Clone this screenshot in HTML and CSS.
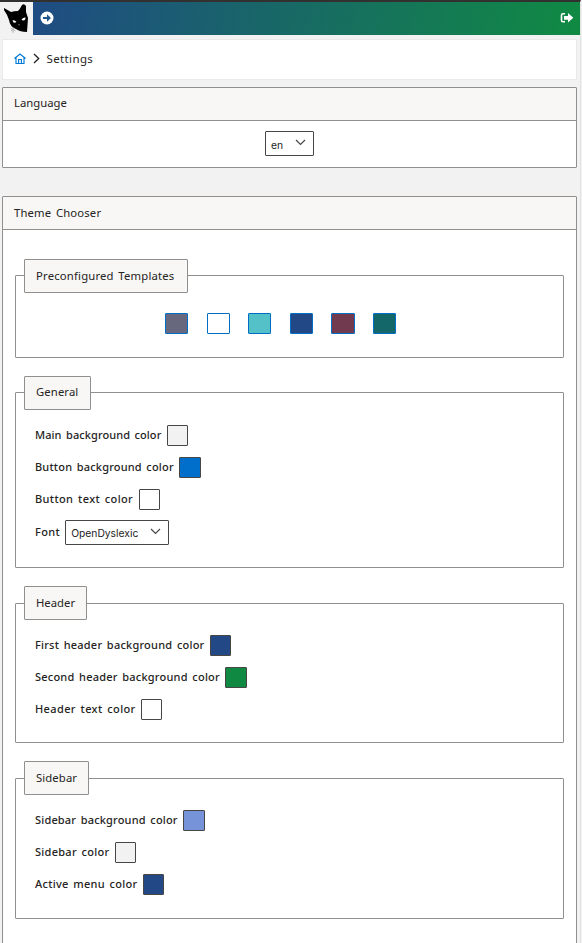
FILE: index.html
```html
<!DOCTYPE html>
<html lang="en">
<head>
<meta charset="utf-8">
<title>Settings</title>
<link rel="stylesheet" href="styles.css">
</head>
<body>
<div class="page">
<header class="topbar">
  <div class="logo"><svg width="33" height="33" viewBox="0 0 33 33"><path d="M4 6L11 10Q14 9 18 9Q20 7 22 3Q24 1 26 4V10L28 16L27 30Q20 30 16 27Q10 25 9 18Q7 12 4 8Z" fill="#000"/><path d="M12.500 18.500q2-1 4 1.500q-3 2-4-1.500zM21.500 18q1-3 4-2.500q0 4-4 2.500z" fill="#fff"/><path d="M18 22.500h2l-1 1z" fill="#aaa"/><path d="M10.500 26l5 3M11 29l4-3M13 25v6" fill="none" stroke="#aaa" stroke-width=".8"/></svg></div>
  <svg class="go" width="14" height="14" viewBox="0 0 14 14"><circle cx="7" cy="7" r="6.500" fill="#fff"/><path d="M3 5.900h4V3.200L11 7l-4 3.800V8.100H3z" fill="#22558a"/></svg>
  <svg class="out" width="14" height="12" viewBox="0 0 14 12"><path d="M5 1.800H3Q1.500 1.800 1.500 3.300v5Q1.500 9.800 3 9.800H5" fill="none" stroke="#fff" stroke-width="1.600"/><path d="M4 4h4V1l5.300 4.800L8 10.600V7.700H4z" fill="#fff"/></svg>
</header>
<nav class="crumbs">
  <svg width="12" height="11" viewBox="0 0 12 11" fill="none" stroke="#0078d4" stroke-width="1.150"><path d="M.5 5.500L6 1l5.500 4.500M2 4.500v6h8v-6M4.600 10.500V6.500h2.800v4"/></svg>
  <svg class="sep" width="7" height="11" viewBox="0 0 7 11"><path d="M1 1l4.700 4.500L1 10" fill="none" stroke="#222" stroke-width="1.300"/></svg>
  <span>Settings</span>
</nav>
<section class="panel language">
  <h2>Language</h2>
  <div class="langbody"><div class="select en"><span>en</span><svg width="11" height="7" viewBox="0 0 11 7"><path d="M1 1l4.500 4.500L10 1"/></svg></div></div>
</section>
<section class="panel themes">
  <h2>Theme Chooser</h2>
  <div class="group templates"><h3>Preconfigured Templates</h3>
    <div class="palette"><i class="slate"></i><i class="white"></i><i class="aqua"></i><i class="navy"></i><i class="wine"></i><i class="teal"></i></div>
  </div>
  <div class="group general"><h3>General</h3>
    <div class="row tighter"><span>Main background color</span><i class="light"></i></div>
    <div class="row tight"><span>Button background color</span><i class="blue"></i></div>
    <div class="row"><span>Button text color</span><i class="white"></i></div>
    <div class="row font"><span>Font</span><div class="select face"><span>OpenDyslexic</span><svg width="11" height="7" viewBox="0 0 11 7"><path d="M1 1l4.500 4.500L10 1"/></svg></div></div>
  </div>
  <div class="group head"><h3>Header</h3>
    <div class="row medium"><span>First header background color</span><i class="navy"></i></div>
    <div class="row medium"><span>Second header background color</span><i class="green"></i></div>
    <div class="row"><span>Header text color</span><i class="white"></i></div>
  </div>
  <div class="group side"><h3>Sidebar</h3>
    <div class="row tight"><span>Sidebar background color</span><i class="peri"></i></div>
    <div class="row short"><span>Sidebar color</span><i class="light"></i></div>
    <div class="row short"><span>Active menu color</span><i class="navy"></i></div>
  </div>
</section>
</div>
</body>
</html>
```
FILE: styles.css
```css
*{box-sizing:border-box}
body{margin:0;background:#f2f2f2;font:500 11px/16px "Noto Sans",sans-serif;letter-spacing:.37px;word-spacing:1.5px;color:#252423}
.page{height:943px;overflow:hidden;border-top:2px solid #323130;border-right:1px solid #e3e3e3;width:581px}
.topbar{height:33px;display:flex;align-items:center;background:linear-gradient(100deg,#204887,#108a43)}
.logo{width:33px;height:33px;background:#f2f2f2}
.logo svg,.go,.out{display:block}
.go{margin:-1px 0 0 7px}
.out{margin:-1px 6px 0 auto}
.crumbs{height:41px;margin:4px 3px 0 2px;border:1px solid #eaeaea;background:#fff;display:flex;align-items:center;padding:0 0 2px 10.5px;font-size:11.5px;font-weight:450}
.sep{margin:0 7px}
.panel{margin-left:2px;width:575px;border:1px solid #8f8f8f;background:#fff;border-radius:1px}
.language{margin-top:7px;height:81px}
.themes{margin-top:28px;height:760px}
h2{font:inherit;font-size:11.3px;font-weight:450;letter-spacing:.15px;margin:0;height:33px;padding:8px 11px;background:#f8f7f5;border-bottom:1px solid #8f8f8f}
.language h2{padding-top:7px;letter-spacing:0}
.langbody{display:flex;justify-content:center;padding-top:10px}
.select{height:25px;border:1px solid #484644;border-radius:1px;display:flex;align-items:center;justify-content:space-between;padding:0 7px 0 5px;font:10.3px/16px Inter,sans-serif;letter-spacing:0;word-spacing:0}
.select svg{fill:none;stroke:#484644;stroke-width:1.2;margin-top:-2px}
.en{width:49px}
.en span{padding-top:2px}
.face{width:104px}
.row .face span{padding-top:1px}
.group{margin-left:12px;width:549px;border:1px solid #8f8f8f;border-radius:1px;padding-left:8px}
h3{font:inherit;font-size:11.3px;font-weight:450;letter-spacing:.1px;width:67px;white-space:nowrap;height:34px;margin:-17px 0 0;padding:8px 11px;border:1px solid #8f8f8f;background:#f8f7f5;border-radius:1px}
.templates{margin-top:45px;height:83px}
.templates h3{width:164px;letter-spacing:.18px}
.general{margin-top:34px;height:176px}
.general h3{padding-top:7px}
.head{margin-top:35px;height:140px}
.side{margin-top:35px;height:141px}
.head h3,.side h3{margin-top:-18px}
.head h3{width:63px;letter-spacing:0}
.side h3{width:65px}
.palette{display:flex;gap:18.3px;margin:20px 0 0 141px}
i{display:block;width:21.5px;height:21px;border:1px solid #484644;border-radius:1px}
.palette i{width:23.3px;border-color:#006ec4}
.row{display:flex;align-items:center;gap:5.4px;height:32px;margin-left:11px}
.row>span{white-space:nowrap}
.row.font{gap:5px}
.medium{letter-spacing:.22px}
.tight{letter-spacing:.18px}
.tighter{letter-spacing:.08px}
.short{letter-spacing:.28px}
h3+.row{margin-top:9px}
.general .row>span{margin-top:-1px}
.row.font{height:34px}
.slate{background:#67677e}.white{background:#fff}.aqua{background:#54c1c9}.navy{background:#224986}.wine{background:#713a4f}.teal{background:#136768}
.light{background:#f2f2f2}.blue{background:#006ecb}.green{background:#108a43}.peri{background:#7693da}
```
